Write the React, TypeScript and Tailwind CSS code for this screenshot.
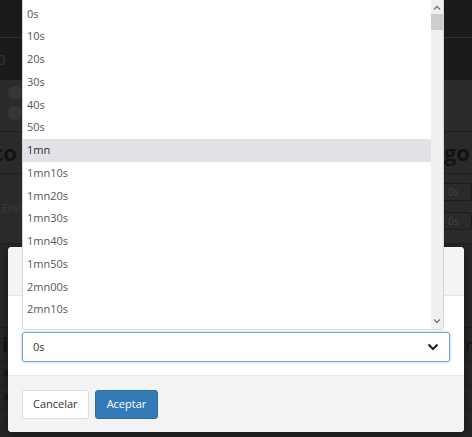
import React from 'react';

const OPTIONS = [
  '0s', '10s', '20s', '30s', '40s', '50s', '1mn', '1mn10s', '1mn20s', '1mn30s', '1mn40s', '1mn50s', '2mn00s', '2mn10s',
];

const App: React.FC = () => {
  return (
    <div className="relative w-[472px] h-[437px] overflow-hidden bg-[#262626] font-['Open_Sans',sans-serif] text-[11px]">
      {/* Page behind the backdrop */}
      <div className="h-[38px] bg-[#1b1b1b] border-b border-[#2e2e2e]" />
      <div className="h-[42px] bg-[#1b1b1b] flex items-center">
        <span className="-ml-[3px] text-[15px] text-[#353535]">0</span>
      </div>
      <div className="h-[52px] bg-[#2b2b2b] flex flex-col gap-[6px] pt-[6px] pl-[8px] border-b border-[#1f1f1f]">
        <div className="w-[14px] h-[14px] rounded-full bg-[#363636]" />
        <div className="w-[14px] h-[14px] rounded-full bg-[#363636]" />
      </div>
      <div className="h-[42px] bg-[#2a2a2a] flex items-center justify-between border-b border-[#1f1f1f]">
        <span className="-ml-[8px] text-[22px] font-bold text-[#121212]">co</span>
        <span className="mr-[2px] text-[22px] font-bold text-[#121212]">go</span>
      </div>
      <div className="h-[70px] bg-[#2a2a2a] flex justify-between border-b border-[#1f1f1f]">
        <span className="pt-[27px] pl-[2px] text-[10px] text-[#3c3c3c]">Envi</span>
        <div className="flex flex-col gap-[11px] pt-[9px]">
          <div className="w-[30px] h-[18px] rounded-[3px] border border-[#1c1c1c] pl-[5px] text-[10px] text-[#444] leading-[16px]">0s</div>
          <div className="w-[30px] h-[18px] rounded-[3px] border border-[#1c1c1c] pl-[5px] text-[10px] text-[#444] leading-[16px]">0s</div>
        </div>
      </div>
      <div className="h-[84px] bg-[#262626] border-b border-[#1f1f1f]" />
      <div className="h-[34px] bg-[#262626] border-b border-[#1f1f1f] flex items-center justify-between">
        <span className="pl-[2px] text-[20px] font-bold text-[#121212]">i</span>
        <span className="text-[16px] text-[#121212]">r</span>
      </div>
      <div className="h-[24px] bg-[#262626] border-b border-[#1f1f1f] flex items-center">
        <span className="pl-[3px] text-[10px] text-[#111]">A</span>
      </div>
      <div className="h-[24px] bg-[#262626] border-b border-[#1f1f1f] flex items-center">
        <span className="pl-[3px] text-[10px] text-[#111]">A</span>
      </div>
      <div className="h-[20px] bg-[#262626] flex">
        <div className="w-[76px] border-r border-[#1a1a1a]" />
      </div>

      {/* Modal */}
      <div className="absolute left-[8px] top-[247px] w-[456px] h-[185px] rounded-[4px] overflow-hidden bg-white flex flex-col shadow-[0_2px_8px_rgba(0,0,0,0.4)]">
        <div className="h-[49px] bg-[#f4f4f4] border-b border-[#e5e5e5]" />
        <div className="h-[79px] bg-white px-[14px] pt-[36px]">
          <div className="h-[30px] rounded-[3px] border border-[#6fa2d8] shadow-[0_0_3px_rgba(102,175,233,0.6)] flex items-center justify-between pl-[10px] pr-[10px] text-[#333]">
            <span>0s</span>
            <svg width="12" height="8" viewBox="0 0 12 8" fill="none">
              <path d="M1.5 1.5 6 6l4.5-4.5" stroke="#222" strokeWidth="2.2" />
            </svg>
          </div>
        </div>
        <div className="flex-1 bg-[#f3f3f3] border-t border-[#e5e5e5] px-[14px] pt-[14px] flex gap-[6px] items-start">
          <button className="h-[29px] px-[10px] rounded-[3px] border border-[#dcdcdc] bg-white text-[#333]">Cancelar</button>
          <button className="h-[29px] px-[11px] rounded-[3px] border border-[#2e6da4] bg-[#337ab7] text-white">Aceptar</button>
        </div>
      </div>

      {/* Open list */}
      <div className="absolute left-[22px] top-[-1px] w-[422px] h-[331px] bg-white border border-[#d5d5d5] rounded-b-[3px] flex overflow-hidden">
        <div className="flex-1 pt-[2.5px]">
          {OPTIONS.map(o => (
            <div
              key={o}
              className={`h-[22.75px] flex items-center pl-[4px] ${o === '1mn' ? 'bg-[#e1e1e7] text-[#2e2e2e]' : 'text-[#575757]'}`}
            >
              {o}
            </div>
          ))}
        </div>
        <div className="w-[12px] bg-[#f0f0f0] flex flex-col items-center">
          <svg width="8" height="6" viewBox="0 0 8 6" className="mt-[5px]">
            <path d="M1 4.5 4 1.5l3 3" stroke="#777" strokeWidth="1.3" fill="none" />
          </svg>
          <div className="mt-[3px] w-[12px] h-[16px] bg-[#cdcdcd]" />
          <div className="flex-1" />
          <svg width="8" height="6" viewBox="0 0 8 6" className="mb-[5px]">
            <path d="M1 1.5 4 4.5l3-3" stroke="#777" strokeWidth="1.3" fill="none" />
          </svg>
        </div>
      </div>
    </div>
  );
};

export default App;
